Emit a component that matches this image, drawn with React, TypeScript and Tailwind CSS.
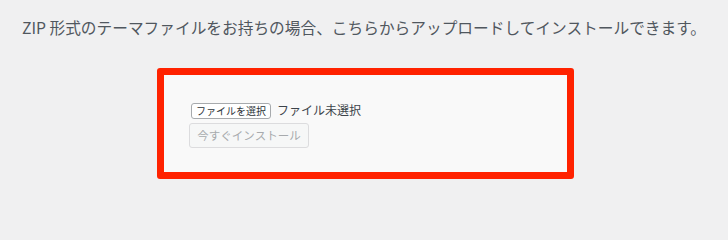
export default function App() {
  return (
    <div
      className="flex min-h-screen w-full flex-col items-center bg-[#f0f0f1]"
      style={{ fontFamily: '"Noto Sans CJK JP", "Noto Sans", sans-serif' }}
    >
      <p className="mt-[18px] text-[15.7px] leading-[20px] text-[#50575e]">
        ZIP 形式のテーマファイルをお持ちの場合、こちらからアップロードしてインストールできます。
      </p>
      <div className="mt-[30px] ml-[3px] h-[111px] w-[417px] rounded-[3px] border-[7px] border-[#ff2200] bg-[#f9f9f9] pl-[27px] pt-[28px]">
        <div className="flex items-center gap-[6px]">
          <button className="flex h-[16px] w-[80px] items-center justify-center rounded-[3px] border border-[#a7aaad] bg-white text-[10px] leading-none text-[#2c3338]">
            ファイルを選択
          </button>
          <span className="-mt-[2px] text-[12px] leading-none text-[#3c434a]">ファイル未選択</span>
        </div>
        <button className="mt-[4px] -ml-[2px] flex h-[25px] w-[120px] items-center justify-center rounded-[3px] border border-[#dcdcde] bg-[#f6f7f7] text-[11.5px] leading-none text-[#a7aaad]">
          今すぐインストール
        </button>
      </div>
    </div>
  );
}
